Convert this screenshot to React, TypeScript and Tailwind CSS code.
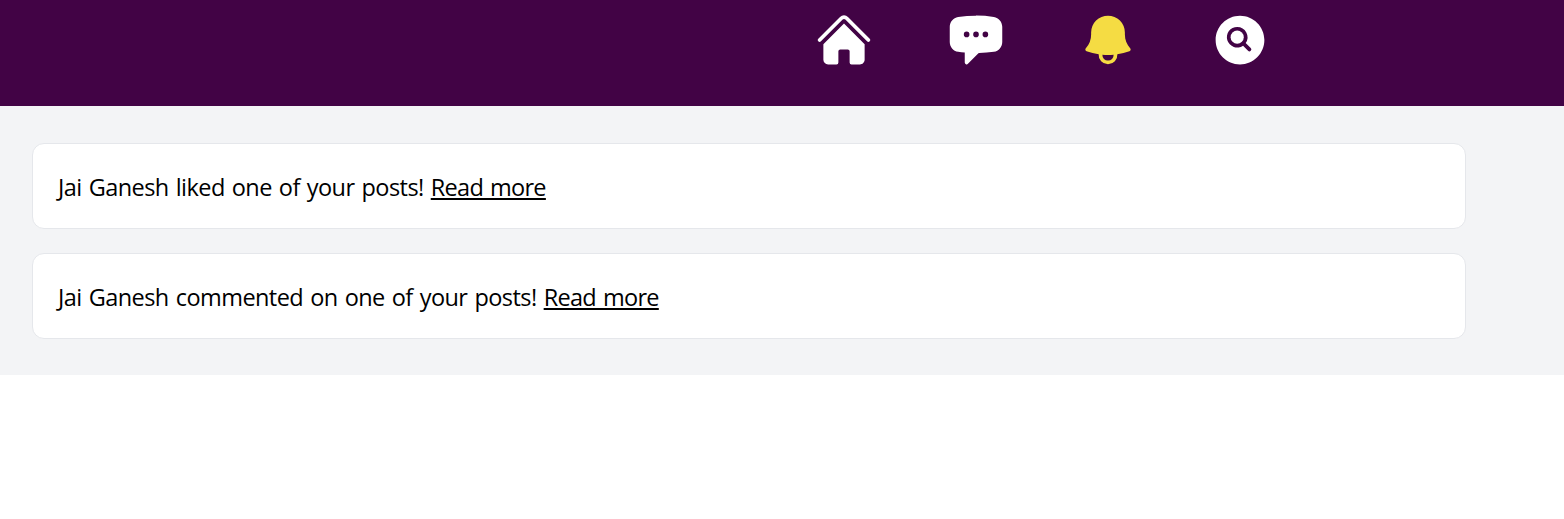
import { HiBell, HiChatBubbleLeftEllipsis, HiHome, HiMagnifyingGlassCircle } from "react-icons/hi2";

const notifications = [
  { id: 1, text: "Jai Ganesh liked one of your posts!" },
  { id: 2, text: "Jai Ganesh commented on one of your posts!" },
];

function Header() {
  return (
    <header className="h-[106px] bg-[#420345] pt-[10px] pl-[814px]">
      <nav className="flex gap-[72px] text-white">
        <a href="#" aria-label="Home"><HiHome className="size-[60px]" /></a>
        <a href="#" aria-label="Messages"><HiChatBubbleLeftEllipsis className="size-[60px]" /></a>
        <a href="#" aria-label="Notifications"><HiBell className="size-[60px] text-[#f5dc43]" /></a>
        <a href="#" aria-label="Search"><HiMagnifyingGlassCircle className="size-[60px]" /></a>
      </nav>
    </header>
  );
}

export default function App() {
  return (
    <div className="min-h-screen bg-white text-black">
      <Header />
      <main className="flex h-[269px] flex-col gap-6 bg-[#f3f4f6] pt-[37px] pl-8">
        {notifications.map((n) => (
          <div
            key={n.id}
            className="flex h-[86px] w-[1434px] items-center rounded-xl border border-[#e5e7eb] bg-white pr-6 pl-[25px] pt-[1px] font-['Open_Sans','Noto_Sans',sans-serif] text-[23.5px] leading-9 tracking-[-0.56px] [word-spacing:1.5px] whitespace-pre"
          >
            <p>
              {n.text}{" "}
              <a href="#" className="tracking-[-0.7px] underline decoration-2 underline-offset-[2px] [text-decoration-skip-ink:none]">Read more</a>
            </p>
          </div>
        ))}
      </main>
    </div>
  );
}
